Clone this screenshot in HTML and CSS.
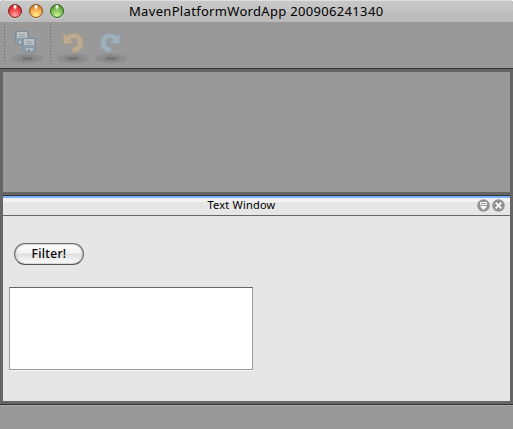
FILE: index.html
```html
<!DOCTYPE html>
<html lang="en">
<head>
<meta charset="utf-8">
<title>MavenPlatformWordApp 200906241340</title>
<link rel="stylesheet" href="styles.css">
</head>
<body>
<div class="window">
  <header class="titlebar">
    <div class="lights"><i class="light red"></i><i class="light amber"></i><i class="light green"></i></div>
    <h1 class="title">MavenPlatformWordApp 200906241340</h1>
  </header>
  <div class="toolbar">
    <div class="group">
      <svg class="icon" width="36" height="40" viewBox="0 0 36 40">
        <ellipse cx="18" cy="31.500" rx="16" ry="5" fill="#8f8f8f"/><ellipse cx="18" cy="31.500" rx="10" ry="3" fill="#878787"/><rect x="13.500" y="30" width="9" height="3" fill="#757575"/>
        <g id="disk"><path d="M6.500 4.500H19.500V17.500H8.500L6.500 15.500Z" fill="#8c9ca8" stroke="#7d8f9d"/><rect x="8" y="5" width="10" height="6" fill="#bdc1c3"/><path d="M10 7.500H16M10 9.500H16" stroke="#9a9fa2"/><path d="M10 14H17V17H10Z" fill="#b8bcbe"/><rect x="12" y="15" width="2" height="2" fill="#7d8d98"/></g>
        <use href="#disk" x="7" y="7"/>
      </svg>
    </div>
    <div class="group">
      <svg class="icon" width="36" height="40" viewBox="0 0 36 40">
        <ellipse cx="18" cy="31.500" rx="16" ry="5" fill="#8f8f8f"/><ellipse cx="18" cy="31.500" rx="10" ry="3" fill="#878787"/><rect x="13.500" y="30" width="9" height="3" fill="#757575"/>
        <path d="M8.500 6.500L11.500 9Q14.500 6.500 19 6.500C24 6.500 28 10.500 28 15.500C28 21 24 25.500 18 25.500L16.500 21C20.500 21 22.500 19 22.500 15.500C22.500 12.500 21 11 19 11Q17 11 15.500 13L18.500 16.500H8.500Z" fill="#bdab92" stroke="#b39f82"/>
      </svg>
      <svg class="icon redo" width="36" height="40" viewBox="0 0 36 40">
        <ellipse cx="18" cy="31.500" rx="16" ry="5" fill="#8f8f8f"/><ellipse cx="18" cy="31.500" rx="10" ry="3" fill="#878787"/><rect x="13.500" y="30" width="9" height="3" fill="#757575"/>
        <path transform="translate(35.500 0) scale(-1 1)" d="M8.500 6.500L11.500 9Q14.500 6.500 19 6.500C24 6.500 28 10.500 28 15.500C28 21 24 25.500 18 25.500L16.500 21C20.500 21 22.500 19 22.500 15.500C22.500 12.500 21 11 19 11Q17 11 15.500 13L18.500 16.500H8.500Z" fill="#a0b0ba" stroke="#8aa2b1"/>
      </svg>
    </div>
  </div>
  <main class="desk">
    <div class="editor"></div>
    <section class="panel">
      <div class="tab">
        <span class="tab-title">Text Window</span>
        <div class="tab-icons">
          <svg width="13" height="13" viewBox="0 0 13 13"><circle cx="6.500" cy="6.500" r="6.200" fill="#929292"/><path d="M3.500 3.500H9.500V5.500H3.500Z" fill="none" stroke="#fff"/><path d="M2.700 7H10.300L6.500 11Z" fill="#fff"/></svg>
          <svg width="13" height="13" viewBox="0 0 13 13"><circle cx="6.500" cy="6.500" r="6.200" fill="#929292"/><path d="M3.700 3.700L9.300 9.300M9.300 3.700L3.700 9.300" stroke="#fff" stroke-width="1.800"/></svg>
        </div>
      </div>
      <div class="content">
        <button class="filter">Filter!</button>
        <div class="textarea"></div>
      </div>
    </section>
  </main>
  <footer class="status"></footer>
</div>
</body>
</html>
```
FILE: styles.css
```css
* { box-sizing: border-box; }
body { margin: 0; background: #fff; font-family: "Noto Sans", sans-serif; color: #000; }
.window { width: 513px; height: 429px; display: flex; flex-direction: column; background: #666; border-radius: 4px 4px 0 0; overflow: hidden; }
.titlebar { height: 22px; display: grid; grid-template-columns: 129px 1fr; align-items: center; background: linear-gradient(#dedede 0 1px, #c8c8c8 1px, #c3c3c3 11px, #bebebe 11px, #bababa 22px); }
.lights { display: flex; gap: 7px; padding-left: 8px; }
.light { width: 14px; height: 14px; border-radius: 50%; border: 1px solid; box-shadow: 0 1px 0 #d8d8d8; }
.red { border-color: #7d2020; background: radial-gradient(ellipse at 50% 12%, #fff 0 8%, transparent 25%), radial-gradient(circle at 50% 85%, #ffadad, #f04347 50%, #a91d20 100%); }
.amber { border-color: #8c4d18; background: radial-gradient(ellipse at 50% 12%, #fff 0 8%, transparent 25%), radial-gradient(circle at 50% 85%, #ffee92, #f2a644 55%, #a95b18 100%); }
.green { border-color: #2c611c; background: radial-gradient(ellipse at 50% 12%, #fff 0 8%, transparent 25%), radial-gradient(circle at 50% 85%, #ccf49a, #75b84b 55%, #36751f 100%); }
.title { margin: 0; font-size: 13px; font-weight: 400; line-height: 22px; white-space: nowrap; letter-spacing: .32px; }
.toolbar { height: 46px; display: flex; background: #999; padding: 2px 0 0 4px; }
.group { display: flex; height: 38px; width: 46px; padding-left: 5px; background: repeating-linear-gradient(#666 0 1px, transparent 1px 3px) 0 0 / 1px 38px no-repeat; }
.icon { flex: none; margin-top: 3px; }
.redo { margin-left: 2px; }
.desk { height: 337px; display: flex; flex-direction: column; gap: 3px; padding: 3px 3px; border-top: 1px solid #333; border-bottom: 1px solid #333; }
.editor { height: 120px; background: #999; }
.panel { height: 206px; border-top: 1px solid #333; background: #e6e6e6; }
.tab { height: 20px; display: grid; grid-template-columns: 1fr auto; align-items: start; border-top: 2px solid #7db2fa; border-bottom: 1px solid #666; background: linear-gradient(#f2f2f2 0 4px, #e6e6e6 4px); }
.tab-title { grid-area: 1 / 1 / 2 / 3; text-align: center; font-size: 11px; line-height: 13px; padding-right: 30px; letter-spacing: .2px; }
.tab-icons { grid-area: 1 / 2; display: flex; gap: 2px; padding: 1px 5px 0 0; }
.content { display: flex; flex-direction: column; align-items: flex-start; padding: 27px 6px 0; }
.filter { width: 70px; height: 22px; margin-left: 5px; padding: 0; border: 1px solid #6c6c6c; border-bottom-color: #555; border-radius: 11px; font: 500 12px/18px "Noto Sans", sans-serif; letter-spacing: .3px; color: #000; background: linear-gradient(#fff 0, #f2f2f2 45%, #dedede 50%, #fff 100%); box-shadow: inset 0 0 2px #777; }
.textarea { width: 244px; height: 83px; margin-top: 22px; background: #fff; border: 1px solid #999; border-top-color: #666; box-shadow: 0 1px 0 #f8f8f8; }
.status { height: 24px; border-top: 1px solid #aaa; background: #999; }
```
